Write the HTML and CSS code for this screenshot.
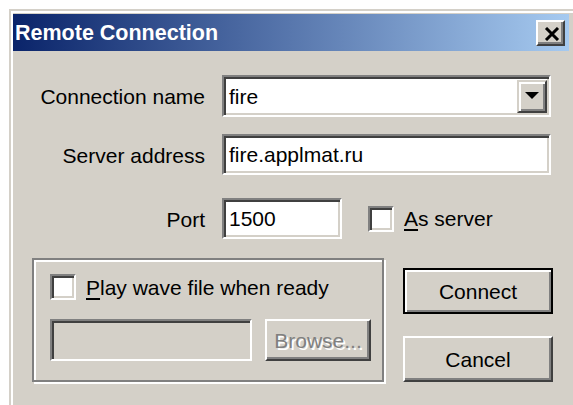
FILE: index.html
```html
<!DOCTYPE html>
<html lang="en">
<head>
<meta charset="utf-8">
<title>Remote Connection</title>
<link rel="stylesheet" href="styles.css">
</head>
<body>
<div class="window">
  <div class="window-inner">
    <div class="titlebar">
      <span class="title">Remote Connection</span>
      <span class="caption-btn">
        <svg width="16" height="14" viewBox="0 0 16 14">
          <path d="M2 1 L14 13 M14 1 L2 13" stroke="#000" stroke-width="3" fill="none"/>
        </svg>
      </span>
    </div>
    <div class="client">
      <div class="form">
        <span class="label">Connection name</span>
        <div class="combo">
          <span class="field-text">fire</span>
          <span class="combo-btn">
            <svg width="14" height="7" viewBox="0 0 14 7"><path d="M0 0 H14 L7 7 Z" fill="#000"/></svg>
          </span>
        </div>
        <span class="label">Server address</span>
        <div class="edit"><span class="field-text">fire.applmat.ru</span></div>
        <span class="label shifted">Port</span>
        <div class="port-row shifted">
          <div class="edit port"><span class="field-text">1500</span></div>
          <div class="check">
            <span class="checkbox"></span>
            <span class="check-label"><u>A</u>s server</span>
          </div>
        </div>
      </div>
      <div class="lower">
        <div class="group">
          <div class="check">
            <span class="checkbox"></span>
            <span class="check-label"><u>P</u>lay wave file when ready</span>
          </div>
          <div class="file-row">
            <div class="edit disabled"></div>
            <span class="button disabled-btn">Browse...</span>
          </div>
        </div>
        <div class="buttons">
          <span class="button default">Connect</span>
          <span class="button cancel">Cancel</span>
        </div>
      </div>
    </div>
  </div>
</div>
</body>
</html>
```
FILE: styles.css
```css
html, body {
  margin: 0;
  height: 100%;
  overflow: hidden;
  background: #ffffff;
}

body {
  padding: 9px 0 0 9px;
  box-sizing: border-box;
  font-family: "Liberation Sans", Arial, sans-serif;
  font-size: 21px;
  color: #000;
}

/* Classic window frame: light outer edge, white inner edge */
.window {
  width: 568px;
  height: 430px;
  box-sizing: border-box;
  background: #d4d0c8;
  border-top: 2px solid #d4d0c8;
  border-left: 2px solid #d4d0c8;
  border-right: 2px solid #404040;
  border-bottom: 2px solid #404040;
}

.window-inner {
  height: 100%;
  box-sizing: border-box;
  border-top: 2px solid #ffffff;
  border-left: 2px solid #ffffff;
  border-right: 2px solid #808080;
  border-bottom: 2px solid #808080;
  padding-top: 1px;
}

.titlebar {
  height: 37px;
  margin-right: 4px;
  padding: 0 4px 0 2px;
  display: flex;
  align-items: center;
  justify-content: space-between;
  background: linear-gradient(to right, #0a246a, #a6caf0);
}

.title {
  color: #ffffff;
  font-weight: bold;
  font-size: 21.5px;
  padding-top: 2px;
}

.caption-btn {
  width: 29px;
  height: 26px;
  box-sizing: border-box;
  display: flex;
  align-items: center;
  justify-content: center;
  padding: 2px 0 0 3px;
  background: #d4d0c8;
  border: 2px solid;
  border-color: #ffffff #404040 #404040 #ffffff;
  box-shadow: inset -2px -2px 0 #808080;
}

/* Dialog contents */
.client {
  padding-top: 24px;
}

.form {
  display: grid;
  grid-template-columns: 192px 329px;
  column-gap: 17px;
  row-gap: 17px;
  align-items: center;
}

.label {
  text-align: right;
  padding-top: 2px;
}

.shifted {
  margin-top: 6px;
}

/* Sunken edit field */
.edit,
.combo,
.checkbox {
  box-sizing: border-box;
  background: #ffffff;
  border: 2px solid;
  border-color: #808080 #ffffff #ffffff #808080;
  box-shadow: inset 2px 2px 0 #404040, inset -2px -2px 0 #d4d0c8;
}

.edit {
  height: 41px;
  display: flex;
  align-items: center;
}

.combo {
  height: 42px;
  display: flex;
  align-items: center;
  justify-content: space-between;
  padding: 3px 2px 2px 0;
}

.field-text {
  padding-left: 5px;
  padding-top: 1px;
}

.combo-btn {
  width: 30px;
  height: 100%;
  box-sizing: border-box;
  display: flex;
  align-items: center;
  justify-content: center;
  background: #d4d0c8;
  border: 2px solid;
  border-color: #d4d0c8 #404040 #404040 #d4d0c8;
  box-shadow: inset 2px 2px 0 #ffffff, inset -2px -2px 0 #808080;
  padding-bottom: 2px;
}

.port-row {
  display: flex;
  align-items: center;
}

.port {
  width: 120px;
}

.check {
  display: flex;
  align-items: center;
  gap: 10px;
}

.port-row .check {
  margin-left: 26px;
}

.checkbox {
  width: 26px;
  height: 26px;
  flex: none;
}

.check-label {
  padding-top: 1px;
}

.check-label u {
  text-decoration-thickness: 2px;
  text-underline-offset: 3px;
}

/* Lower section: group box and command buttons */
.lower {
  display: flex;
  margin-top: 19px;
  padding-left: 19px;
}

.group {
  width: 352px;
  box-sizing: border-box;
  padding: 14px 11px 15px 16px;
  border: 2px solid #808080;
  box-shadow: inset 2px 2px 0 #ffffff, 2px 2px 0 #ffffff;
}

.group .check {
  height: 26px;
}

.file-row {
  display: flex;
  margin-top: 19px;
  gap: 13px;
}

.edit.disabled {
  width: 202px;
  height: 42px;
  background: #d4d0c8;
}

.button {
  box-sizing: border-box;
  display: flex;
  align-items: center;
  justify-content: center;
  background: #d4d0c8;
  border: 2px solid;
  border-color: #ffffff #404040 #404040 #ffffff;
  box-shadow: inset -2px -2px 0 #808080;
  padding-top: 1px;
}

.disabled-btn {
  width: 106px;
  height: 42px;
  color: #808080;
  text-shadow: 2px 2px 0 #ffffff;
}

.buttons {
  display: flex;
  flex-direction: column;
  margin-left: 19px;
  padding-top: 10px;
  gap: 22px;
}

.buttons .button {
  width: 150px;
  height: 46px;
}

.button.default {
  border-color: #000000;
  box-shadow: inset 2px 2px 0 #ffffff, inset -2px -2px 0 #808080;
}
```
